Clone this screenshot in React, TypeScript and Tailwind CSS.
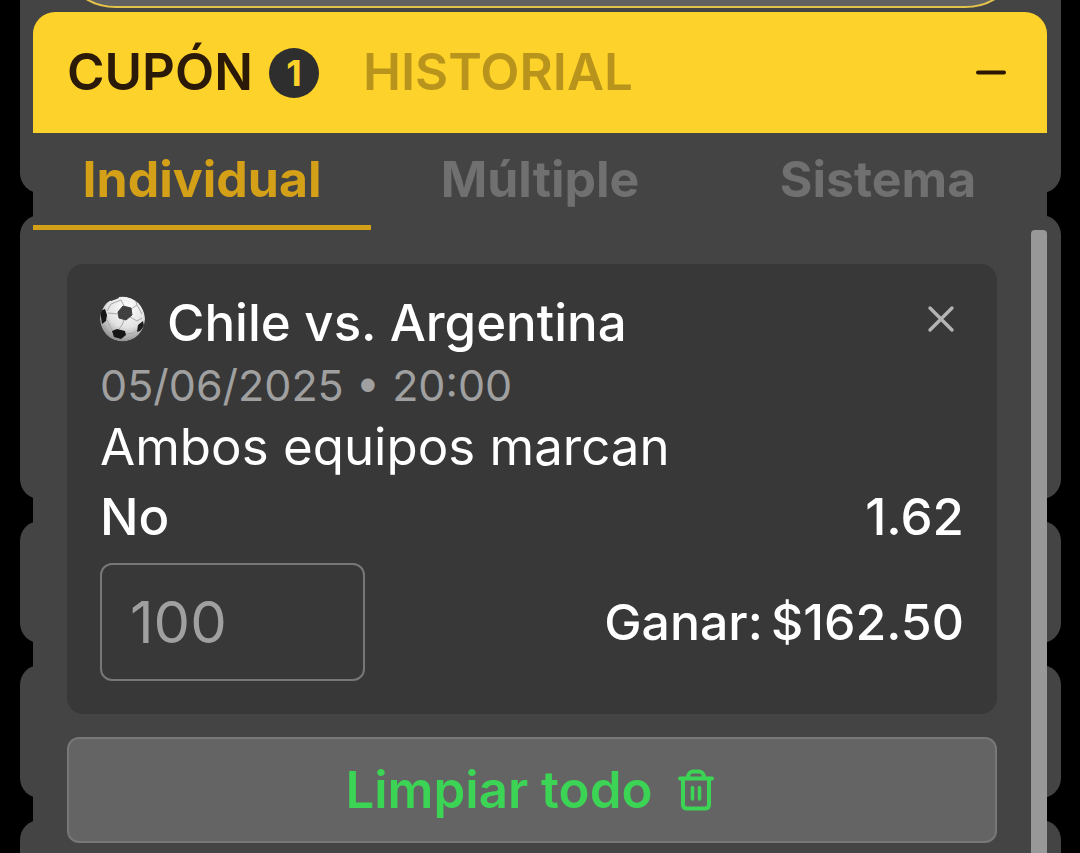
import { useState } from 'react'
import clsx from 'clsx'

const tabs = ['Individual', 'Múltiple', 'Sistema']

function BallIcon() {
  return (
    <svg viewBox="0 0 46 46" className="mt-1 h-[46px] w-[46px] shrink-0" aria-hidden="true">
      <defs>
        <radialGradient id="ball" cx="0.6" cy="0.25" r="0.8">
          <stop offset="0" stopColor="#ffffff" />
          <stop offset="0.55" stopColor="#e2e2e2" />
          <stop offset="1" stopColor="#858585" />
        </radialGradient>
        <clipPath id="ball-clip">
          <circle cx="22.500" cy="23" r="22.500" />
        </clipPath>
      </defs>
      <g clipPath="url(#ball-clip)">
        <circle cx="22.500" cy="23" r="22.500" fill="url(#ball)" />
        <path
          d="M24 10 21 4 11 8 7 15M31 13 37 9 35 3M30 21 37 25 42 22M24 24 22 29 19 33M18 18 8 17M7 24 12 34M26 38 34 37 38 33M37 9 42 18"
          fill="none"
          stroke="#a8a8a8"
          strokeWidth="1"
        />
        <path d="M18 16 23 10 31 12 32 19 26 24 19 22Z" fill="#404040" strokeLinejoin="round" stroke="#404040" />
        <path d="M0 15 5 13 7 19 6 25 2 28Z" fill="#161616" />
        <path d="M12 35 17 33 25 35 26 39 21 43 14 41Z" fill="#161616" />
        <path d="M38 29 43 25 44 30 40 35 37 36Z" fill="#1f1f1f" />
        <path d="M9 4 18 0 19 2 11 5Z" fill="#2a2a2a" />
      </g>
    </svg>
  )
}

function CloseIcon() {
  return (
    <svg viewBox="0 0 46 46" className="h-[46px] w-[46px]" aria-hidden="true">
      <path d="M12 12 34 34M34 12 12 34" stroke="#b4b4b4" strokeWidth="3.4" strokeLinecap="round" />
    </svg>
  )
}

function MinusIcon() {
  return (
    <svg viewBox="0 0 46 46" className="h-[46px] w-[46px]" aria-hidden="true">
      <path d="M10 22.500H36" stroke="#2b1503" strokeWidth="4" strokeLinecap="round" />
    </svg>
  )
}

function TrashIcon() {
  return (
    <svg
      viewBox="0 0 38 44"
      className="h-11 w-[38px]"
      fill="none"
      stroke="currentColor"
      strokeWidth="4"
      strokeLinecap="round"
      strokeLinejoin="round"
      aria-hidden="true"
    >
      <path d="M3 10.500H35" />
      <path d="M11 10C11 6 13 3.500 16 3.500H22C25 3.500 27 6 27 10" />
      <path d="M6 10.500V36.500C6 39 7.500 40.500 10 40.500H28C30.500 40.500 32 39 32 36.500V10.500" />
      <path d="M15.500 19.500V31M22.500 19.500V31" strokeWidth="3.6" />
    </svg>
  )
}

/* Cards of the page behind the coupon */
function Backdrop() {
  return (
    <div className="absolute inset-0 flex flex-col gap-[22px] overflow-hidden pr-[19px] pl-5" aria-hidden="true">
      <div className="h-[193px] shrink-0 rounded-b-[20px] bg-[#444444] px-9">
        <div className="-mt-28 h-[120px] rounded-full border-2 border-[#e3c34a] bg-[#616161]" />
      </div>
      <div className="h-[284px] shrink-0 rounded-[20px] bg-[#444444]" />
      <div className="h-[122px] shrink-0 rounded-[20px] bg-[#444444]" />
      <div className="h-[133px] shrink-0 rounded-[20px] bg-[#444444]" />
      <div className="flex-1 rounded-t-[20px] bg-[#444444]" />
    </div>
  )
}

export default function App() {
  const [active, setActive] = useState('Individual')
  const [stake, setStake] = useState('100')

  return (
    <div className="relative flex min-h-screen flex-col bg-black px-[33px] pt-3 font-['Inter',sans-serif] text-[51px] [font-optical-sizing:none]">
      <Backdrop />

      <main className="relative flex flex-1 flex-col rounded-t-[22px] bg-[#444444]">
        <header className="flex h-[121px] items-center rounded-t-[22px] bg-[#fdd22a] pr-[33px] pl-[34px] font-semibold">
          <button type="button" className="flex items-center gap-4 text-[#2b1a08]">
            CUPÓN
            <span className="flex h-[50px] w-[50px] items-center justify-center rounded-full bg-[#2e2e2e] text-4xl font-bold text-[#fdd22a]">
              1
            </span>
          </button>
          <button type="button" className="ml-11 text-[#b8941c]">
            HISTORIAL
          </button>
          <button type="button" aria-label="Minimizar" className="ml-auto">
            <MinusIcon />
          </button>
        </header>

        <nav className="grid grid-cols-3">
          {tabs.map((tab) => (
            <button
              key={tab}
              type="button"
              onClick={() => setActive(tab)}
              className={clsx(
                'h-[97px] border-b-[5px] text-[50px] font-bold',
                active === tab ? 'border-[#d4a017] text-[#d4a017]' : 'border-transparent text-[#707070]'
              )}
            >
              {tab}
            </button>
          ))}
        </nav>

        <div className="flex flex-1">
          <div className="flex flex-1 flex-col gap-[23px] px-[34px] pt-[34px] pb-2.5">
            <article className="rounded-2xl bg-[#383838] px-[33px] pt-7 pb-[33px] leading-[62px] text-white">
              <div className="flex items-start">
                <BallIcon />
                <h2 className="ml-[21px] font-medium">Chile vs. Argentina</h2>
                <button type="button" aria-label="Eliminar" className="mt-1 ml-auto">
                  <CloseIcon />
                </button>
              </div>
              <p className="text-[43px] text-[#a0a0a0]">05/06/2025 • 20:00</p>
              <p>Ambos equipos marcan</p>
              <div className="mt-2 flex justify-between font-medium">
                <span>No</span>
                <span>1.62</span>
              </div>
              <div className="mt-[15px] flex items-center justify-between font-medium">
                <input
                  type="text"
                  inputMode="decimal"
                  aria-label="Monto"
                  value={stake}
                  onChange={(e) => setStake(e.target.value)}
                  className="h-[118px] w-[265px] rounded-xl border-2 border-[#777777] bg-transparent px-7 text-[58px] font-normal text-[#a0a0a0] outline-none"
                />
                <p className="flex gap-2 text-[50px]">
                  <span>Ganar:</span>
                  <span>$162.50</span>
                </p>
              </div>
            </article>

            <button
              type="button"
              className="flex h-[106px] items-center justify-center gap-6 rounded-xl border-2 border-[#777777] bg-[#646464] pr-1 font-semibold text-[#3bd454]"
            >
              Limpiar todo
              <TrashIcon />
            </button>
          </div>
          <div className="w-4 rounded-t-sm bg-[#989898]" />
        </div>
      </main>
    </div>
  )
}
